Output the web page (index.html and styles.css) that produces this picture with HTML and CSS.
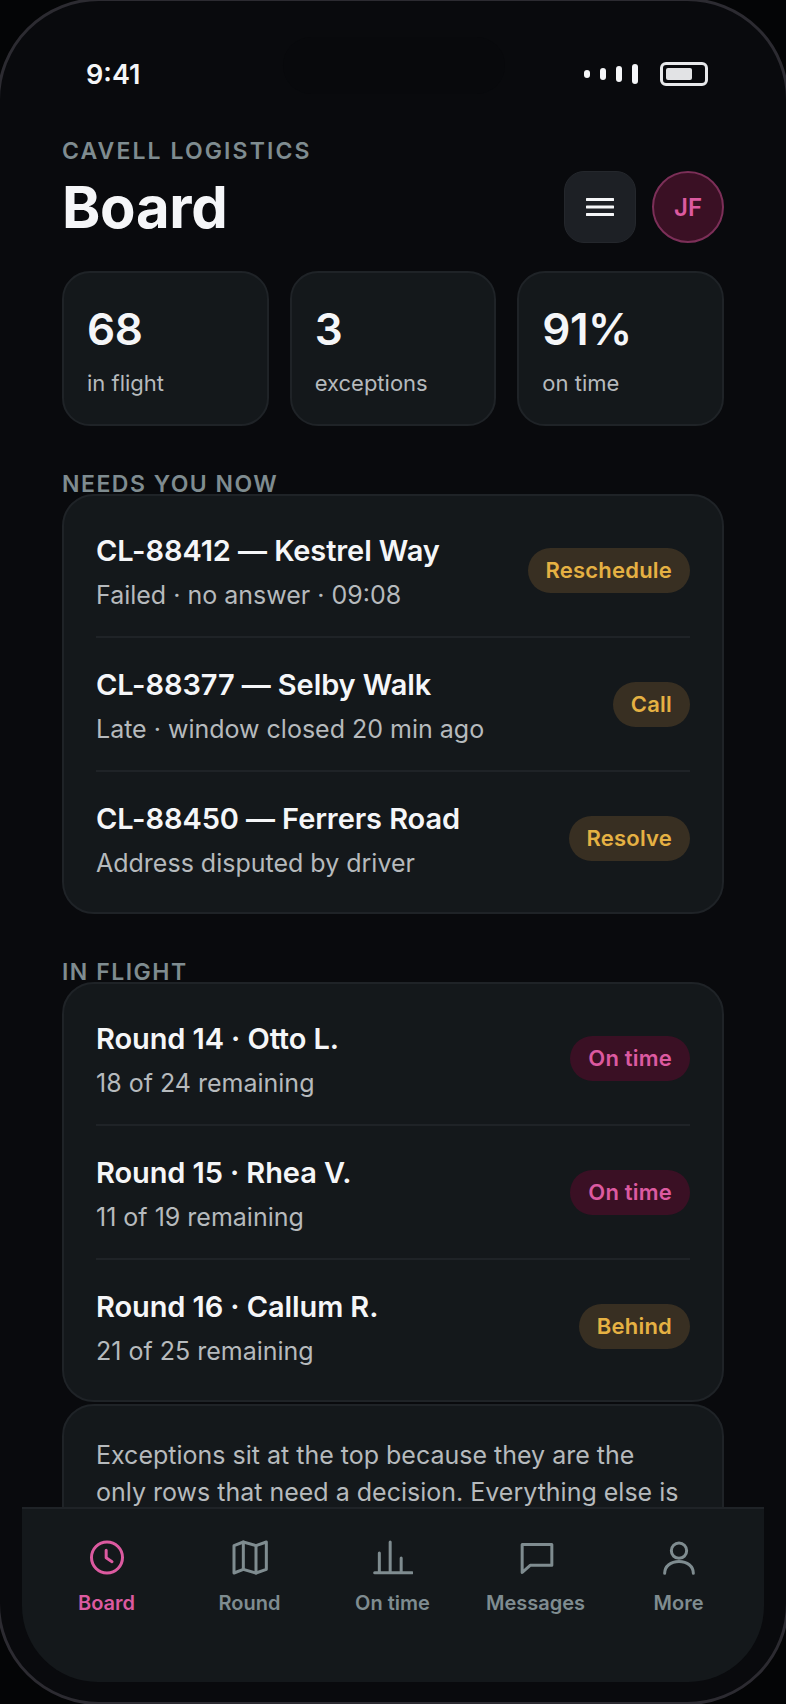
FILE: index.html
```html
<!DOCTYPE html>
<html lang="en">
<head>
	<meta charset="utf-8">
	<title>Board</title>
	<link rel="stylesheet" href="styles.css">
</head>
<body>
<div class="phone">
	<div class="screen">
		<div class="island"></div>
		<div class="status">
			<span class="clock">9:41</span>
			<div class="status_icons">
				<div class="signal"><i class="s1"></i><i class="s2"></i><i class="s3"></i><i class="s4"></i></div>
				<div class="battery"><i></i></div>
			</div>
		</div>

		<div class="head">
			<div>
				<p class="eyebrow">CAVELL LOGISTICS</p>
				<h1>Board</h1>
			</div>
			<div class="head_actions">
				<div class="menu_btn">
					<svg width="28" height="18" viewBox="0 0 28 18"><path d="M1 1.500h26M1 9h26M1 16.500h26" stroke="#f5f6f8" stroke-width="3" stroke-linecap="round"/></svg>
				</div>
				<div class="avatar">JF</div>
			</div>
		</div>

		<div class="stats">
			<div class="stat"><b>68</b><span>in flight</span></div>
			<div class="stat"><b>3</b><span>exceptions</span></div>
			<div class="stat"><b>91%</b><span>on time</span></div>
		</div>

		<p class="section first">NEEDS YOU NOW</p>
		<div class="card">
			<div class="row">
				<div class="row_text"><p class="title">CL-88412 — Kestrel Way</p><p class="sub">Failed · no answer · 09:08</p></div>
				<span class="pill amber">Reschedule</span>
			</div>
			<div class="row">
				<div class="row_text"><p class="title">CL-88377 — Selby Walk</p><p class="sub">Late · window closed 20 min ago</p></div>
				<span class="pill amber">Call</span>
			</div>
			<div class="row">
				<div class="row_text"><p class="title">CL-88450 — Ferrers Road</p><p class="sub">Address disputed by driver</p></div>
				<span class="pill amber">Resolve</span>
			</div>
		</div>

		<p class="section">IN FLIGHT</p>
		<div class="card">
			<div class="row">
				<div class="row_text"><p class="title">Round 14 · Otto L.</p><p class="sub">18 of 24 remaining</p></div>
				<span class="pill pink">On time</span>
			</div>
			<div class="row">
				<div class="row_text"><p class="title">Round 15 · Rhea V.</p><p class="sub">11 of 19 remaining</p></div>
				<span class="pill pink">On time</span>
			</div>
			<div class="row">
				<div class="row_text"><p class="title">Round 16 · Callum R.</p><p class="sub">21 of 25 remaining</p></div>
				<span class="pill amber">Behind</span>
			</div>
		</div>

		<div class="card note">
			<p>Exceptions sit at the top because they are the only rows that need a decision. Everything else is</p>
		</div>

		<div class="tabbar">
			<div class="tab active">
				<svg width="40" height="40" viewBox="0 0 24 24"><circle cx="12" cy="12.300" r="9.300"/><path d="M11.500 8v4.500l3.500 2.300"/></svg>
				<span>Board</span>
			</div>
			<div class="tab">
				<svg width="40" height="40" viewBox="0 0 24 24"><path d="M2.400 5.200L8 3l7.600 2.200L21.800 3v16.400l-6.200 2.200L8 19.400l-5.600 2.200z"/><path d="M8 3v16.400M15.600 5.200v16.400"/></svg>
				<span>Round</span>
			</div>
			<div class="tab">
				<svg width="40" height="40" viewBox="0 0 24 24"><path d="M1 21.500h22.400M3.800 21.500V9.600M10.300 21.500V3M16.900 21.500v-8.900"/></svg>
				<span>On time</span>
			</div>
			<div class="tab">
				<svg width="40" height="40" viewBox="0 0 24 24"><path d="M3.700 4.500h17.800V17H8.500l-4.800 4.300z"/></svg>
				<span>Messages</span>
			</div>
			<div class="tab">
				<svg width="40" height="40" viewBox="0 0 24 24"><circle cx="12" cy="8.200" r="4.600"/><path d="M3.400 21.800c0-4.300 3.600-7.100 8.600-7.100s8.600 2.800 8.600 7.100"/></svg>
				<span>More</span>
			</div>
		</div>
	</div>
</div>
</body>
</html>
```

FILE: styles.css
```css
*
{
	box-sizing:border-box;
}
html,body
{
	margin:0;
	padding:0;
	height:1704px;
	overflow:hidden;
	background:#040506;
}
p,h1
{
	margin:0;
}
.phone
{
	width:792px;
	height:1707px;
	margin:-2px 0 0 -3px;
	border:3px solid #2c2b31;
	border-radius:102px;
	background:#090a0d;
	overflow:hidden;
	font-family:Inter,"Liberation Sans",sans-serif;
	color:#f5f6f8;
}
.screen
{
	position:relative;
	height:100%;
	padding:39px 62px 0;
	overflow:hidden;
}
.island
{
	position:absolute;
	top:36px;
	left:283px;
	width:222px;
	height:57px;
	border-radius:29px;
	background:#08090c;
}
.status
{
	position:relative;
	display:flex;
	justify-content:space-between;
	align-items:center;
	height:68px;
	padding:0 16px 0 24px;
}
.clock
{
	font-size:27px;
	font-weight:600;
}
.status_icons
{
	display:flex;
	align-items:center;
	gap:22px;
}
.signal
{
	display:flex;
	align-items:center;
	gap:10px;
}
.signal i
{
	display:block;
	width:6px;
	border-radius:3px;
	background:#f5f6f8;
}
.s1{height:8px;}
.s2{height:12px;}
.s3{height:16px;}
.s4{height:20px;}
.battery
{
	width:48px;
	height:24px;
	border:3px solid #e8e9eb;
	border-radius:6px;
	padding:3px;
}
.battery i
{
	display:block;
	width:26px;
	height:100%;
	background:#e2e3e5;
	border-radius:2px;
}
.head
{
	display:flex;
	justify-content:space-between;
	align-items:flex-end;
	margin-top:28px;
}
.eyebrow
{
	font-size:23px;
	font-weight:600;
	letter-spacing:2.1px;
	line-height:30px;
	color:#7f8c90;
}
h1
{
	font-size:58px;
	font-weight:650;
	letter-spacing:-0.3px;
	line-height:70px;
	margin-top:6px;
}
.head_actions
{
	display:flex;
	gap:16px;
	margin-bottom:-1px;
}
.menu_btn
{
	display:flex;
	align-items:center;
	justify-content:center;
	width:72px;
	height:72px;
	border-radius:20px;
	background:#1d2025;
	border:1px solid #24272c;
}
.avatar
{
	display:flex;
	align-items:center;
	justify-content:center;
	width:72px;
	height:72px;
	border-radius:50%;
	background:#3a1024;
	border:2px solid #7c2f58;
	color:#dc5aa0;
	font-size:24px;
	font-weight:600;
}
.stats
{
	display:grid;
	grid-template-columns:repeat(3,1fr);
	gap:21px;
	margin-top:29px;
}
.stat
{
	height:155px;
	padding:28px 23px 0;
	border-radius:28px;
	background:#14181b;
	border:2px solid #1f2327;
}
.stat b
{
	display:block;
	font-size:44px;
	font-weight:600;
	line-height:56px;
	letter-spacing:-0.5px;
}
.stat span
{
	display:block;
	margin-top:11px;
	font-size:22px;
	line-height:30px;
	color:#b6babd;
}
.section
{
	font-size:23px;
	font-weight:600;
	letter-spacing:1.5px;
	line-height:30px;
	color:#7f8c90;
	margin-top:43px;
	height:25px;
}
.card
{
	border-radius:32px;
	background:#14181b;
	border:2px solid #1f2327;
	padding:8px 32px;
}
.row
{
	display:flex;
	align-items:center;
	justify-content:space-between;
	height:134px;
	border-top:2px solid #1f2327;
}
.row:first-child
{
	border-top:none;
	height:132px;
}
.row_text
{
	padding-top:3px;
}
.title
{
	font-size:29px;
	font-weight:600;
	line-height:40px;
	letter-spacing:-0.1px;
	color:#f5f6f8;
}
.sub
{
	font-size:25px;
	line-height:34px;
	margin-top:7px;
	color:#b6babd;
}
.pill
{
	display:block;
	height:45px;
	line-height:45px;
	padding:0 18px;
	border-radius:23px;
	font-size:22px;
	font-weight:600;
	letter-spacing:0.2px;
}
.amber
{
	background:#382f22;
	color:#e5b143;
}
.pink
{
	background:#3a1024;
	color:#dc5aa0;
}
.note
{
	margin-top:2px;
	min-height:200px;
	padding:31px 32px 0;
}
.note p
{
	font-size:25px;
	line-height:37px;
	color:#b6babd;
}
.tabbar
{
	position:absolute;
	left:22px;
	right:22px;
	bottom:20px;
	height:175px;
	display:grid;
	grid-template-columns:repeat(5,143px);
	padding:28px 13px 0;
	background:#14181b;
	border-top:2px solid #1f2327;
	border-radius:0 0 76px 76px;
}
.tab
{
	display:flex;
	flex-direction:column;
	align-items:center;
	gap:14px;
	font-size:20px;
	line-height:24px;
	font-weight:600;
	color:#7f8c90;
}
.tab svg
{
	fill:none;
	stroke:#7f8c90;
	stroke-width:1.8;
	stroke-linejoin:round;
	stroke-linecap:round;
}
.tab.active
{
	color:#dc5aa0;
}
.tab.active svg
{
	stroke:#dc5aa0;
}
```
